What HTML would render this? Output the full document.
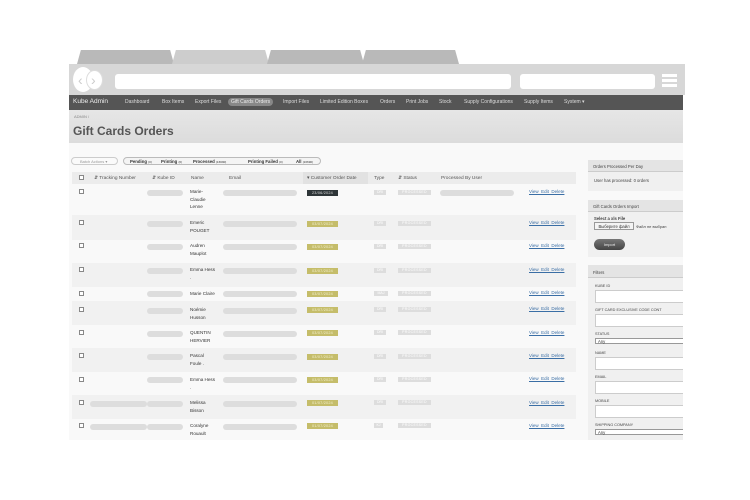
<!DOCTYPE html>
<html><head><meta charset="utf-8"><style>
*{margin:0;padding:0;box-sizing:border-box}
body{width:750px;height:500px;background:#fff;position:relative;overflow:hidden;font-family:"Liberation Sans",Arial,sans-serif;color:#333}
.a{position:absolute}
.tab{position:absolute;top:50px;height:14px;width:97px;background:#b9b9b9;clip-path:polygon(4% 0,96% 0,100% 100%,0 100%)}
.nav span{position:absolute;top:4px;font-size:5px;color:#ddd}
.pill{position:absolute;height:6px;border-radius:3px;background:#ddd}
.cb{position:absolute;width:5px;height:5px;border:0.6px solid #888;background:#fff}
.nm{position:absolute;font-size:4.6px;line-height:7.5px;color:#333}
.dt{position:absolute;width:31px;height:6px;background:#c5bd6a;color:#f3f0d0;font-size:3.8px;text-align:center;line-height:6px;letter-spacing:.2px}
.ty{position:absolute;width:12px;height:5px;background:#ddd;color:#fff;font-size:3.5px;text-align:center;line-height:5px}
.st{position:absolute;width:33px;height:5px;background:#ddd;color:#fff;font-size:3.5px;text-align:center;line-height:5px;letter-spacing:.3px}
.ac{position:absolute;font-size:4.5px;color:#3a6ea5;text-decoration:underline}
.th{position:absolute;top:176px;font-size:4.8px;color:#555}
.sl{position:absolute;font-size:4.2px;color:#444}
.inp{position:absolute;left:595px;width:88px;height:13px;background:#fff;border:0.6px solid #ccc;border-right:none}
.sel{position:absolute;left:595px;width:88px;height:6px;background:#fff;border:0.6px solid #999;border-right:none;font-size:4.2px;line-height:5px;padding-left:2px}
</style></head><body>
<div class="tab" style="left:77px"></div>
<div class="tab" style="left:172px;background:#cdcdcd"></div>
<div class="tab" style="left:267px"></div>
<div class="tab" style="left:362px"></div>
<div class="a" style="left:69px;top:64px;width:616px;height:31px;background:#d7d7d7"></div>
<div class="a" style="left:73px;top:67px;width:20px;height:25px;border-radius:50%;background:#fff"></div>
<div class="a" style="left:86px;top:70px;width:17px;height:20px;border-radius:50%;background:#fff;border:1px solid #ddd"></div>
<div class="a" style="left:78px;top:73px;font-size:14px;color:#ccc;line-height:14px">&#x2039;</div>
<div class="a" style="left:91px;top:73px;font-size:14px;color:#ccc;line-height:14px">&#x203A;</div>
<div class="a" style="left:115px;top:74px;width:396px;height:15px;background:#fff;border-radius:3px"></div>
<div class="a" style="left:520px;top:74px;width:135px;height:15px;background:#fff;border-radius:3px"></div>
<div class="a" style="left:662px;top:74px;width:15px;height:3px;background:#fff"></div>
<div class="a" style="left:662px;top:79px;width:15px;height:3px;background:#fff"></div>
<div class="a" style="left:662px;top:84px;width:15px;height:3px;background:#fff"></div>
<div class="a nav" style="left:69px;top:95px;width:614px;height:15px;background:#555">
<span style="left:4px;top:3px;font-size:6.5px;color:#eee">Kube Admin</span>
<span style="left:56px">Dashboard</span><span style="left:93px">Box Items</span><span style="left:126px">Export Files</span>
<span style="left:159px;top:3px;background:#888;border-radius:4px;padding:1px 3px;color:#eee">Gift Cards Orders</span>
<span style="left:214px">Import Files</span><span style="left:251px">Limited Edition Boxes</span><span style="left:311px">Orders</span><span style="left:337px">Print Jobs</span><span style="left:370px">Stock</span><span style="left:395px">Supply Configurations</span><span style="left:455px">Supply Items</span><span style="left:495px">System ▾</span>
</div>
<div class="a" style="left:69px;top:110px;width:614px;height:33px;background:linear-gradient(#e6e6e6,#dcdcdc)"></div>
<div class="a" style="left:74px;top:114px;font-size:4px;color:#888">ADMIN /</div>
<div class="a" style="left:73px;top:124px;font-size:12px;font-weight:bold;color:#555">Gift Cards Orders</div>
<div class="a" style="left:69px;top:143px;width:614px;height:297px;background:#f9f9f9"></div>
<div class="a" style="left:71px;top:157px;width:47px;height:8px;border:0.6px solid #ccc;border-radius:4px;font-size:4px;color:#999;line-height:7px;padding-left:8px;background:#fafafa">Batch Actions ▾</div>
<div class="a" style="left:123px;top:157px;width:198px;height:8px;border:0.6px solid #bbb;border-radius:4px;background:#f4f4f4;font-size:4.3px;line-height:7px;color:#333">
<span class="a" style="left:6px;font-weight:bold">Pending <span style="font-weight:normal;font-size:3px">(0)</span></span>
<span class="a" style="left:37px;font-weight:bold">Printing <span style="font-weight:normal;font-size:3px">(0)</span></span>
<span class="a" style="left:69px;font-weight:bold">Processed <span style="font-weight:normal;font-size:3px">(16690)</span></span>
<span class="a" style="left:124px;font-weight:bold">Printing Failed <span style="font-weight:normal;font-size:3px">(0)</span></span>
<span class="a" style="left:172px;font-weight:bold">All <span style="font-weight:normal;font-size:3px">(16690)</span></span>
</div>
<div class="a" style="left:72px;top:172px;width:504px;height:12px;background:#ececec"></div>
<div class="a" style="left:303px;top:172px;width:65px;height:12px;background:#e2e2e2"></div>
<div class="cb" style="left:79px;top:175px"></div>
<div class="th" style="left:94px">⇵ Tracking Number</div>
<div class="th" style="left:152px">⇵ Kube ID</div>
<div class="th" style="left:191px">Name</div>
<div class="th" style="left:229px">Email</div>
<div class="th" style="left:307px">▾ Customer Order Date</div>
<div class="th" style="left:374px">Type</div>
<div class="th" style="left:398px">⇵ Status</div>
<div class="th" style="left:441px">Processed By User</div>

<div class="a" style="left:72px;top:215px;width:504px;height:25px;background:#f1f1f1"></div>
<div class="a" style="left:72px;top:263px;width:504px;height:24px;background:#f1f1f1"></div>
<div class="a" style="left:72px;top:301px;width:504px;height:24px;background:#f1f1f1"></div>
<div class="a" style="left:72px;top:348px;width:504px;height:24px;background:#f1f1f1"></div>
<div class="a" style="left:72px;top:395px;width:504px;height:24px;background:#f1f1f1"></div>

<div class="cb" style="left:79px;top:189px"></div><div class="pill" style="left:147px;top:190px;width:36px"></div><div class="nm" style="left:190px;top:188px">Marie-<br>Claudie<br>Lenne</div><div class="pill" style="left:223px;top:190px;width:74px"></div><div class="dt" style="left:307px;top:190px;background:#2e3538;color:#ddd">23/06/2024</div><div class="ty" style="left:374px;top:190px">DRI</div><div class="st" style="left:398px;top:190px">PROCESSED</div><div class="pill" style="left:440px;top:190px;width:74px"></div><div class="ac" style="left:529px;top:189px">View&nbsp; Edit&nbsp; Delete</div>

<div class="cb" style="left:79px;top:220px"></div><div class="pill" style="left:147px;top:221px;width:36px"></div><div class="nm" style="left:190px;top:219px">Emeric<br>POUGET</div><div class="pill" style="left:223px;top:221px;width:74px"></div><div class="dt" style="left:307px;top:221px">03/07/2024</div><div class="ty" style="left:374px;top:221px">DRI</div><div class="st" style="left:398px;top:221px">PROCESSED</div><div class="ac" style="left:529px;top:220px">View&nbsp; Edit&nbsp; Delete</div>

<div class="cb" style="left:79px;top:243px"></div><div class="pill" style="left:147px;top:244px;width:36px"></div><div class="nm" style="left:190px;top:242px">Audren<br>Mauplot</div><div class="pill" style="left:223px;top:244px;width:74px"></div><div class="dt" style="left:307px;top:244px">03/07/2024</div><div class="ty" style="left:374px;top:244px">DRI</div><div class="st" style="left:398px;top:244px">PROCESSED</div><div class="ac" style="left:529px;top:243px">View&nbsp; Edit&nbsp; Delete</div>

<div class="cb" style="left:79px;top:267px"></div><div class="pill" style="left:147px;top:268px;width:36px"></div><div class="nm" style="left:190px;top:266px">Emma Hess<br>.</div><div class="pill" style="left:223px;top:268px;width:74px"></div><div class="dt" style="left:307px;top:268px">03/07/2024</div><div class="ty" style="left:374px;top:268px">DRI</div><div class="st" style="left:398px;top:268px">PROCESSED</div><div class="ac" style="left:529px;top:267px">View&nbsp; Edit&nbsp; Delete</div>

<div class="cb" style="left:79px;top:291px"></div><div class="pill" style="left:147px;top:291px;width:36px"></div><div class="nm" style="left:190px;top:290px">Marie Claire</div><div class="pill" style="left:223px;top:291px;width:74px"></div><div class="dt" style="left:307px;top:291px">03/07/2024</div><div class="ty" style="left:374px;top:291px;width:14px">MAJ</div><div class="st" style="left:398px;top:291px">PROCESSED</div><div class="ac" style="left:529px;top:290px">View&nbsp; Edit&nbsp; Delete</div>

<div class="cb" style="left:79px;top:307px"></div><div class="pill" style="left:147px;top:308px;width:36px"></div><div class="nm" style="left:190px;top:306px">Noémie<br>Husson</div><div class="pill" style="left:223px;top:308px;width:74px"></div><div class="dt" style="left:307px;top:307px">03/07/2024</div><div class="ty" style="left:374px;top:307px">DRI</div><div class="st" style="left:398px;top:307px">PROCESSED</div><div class="ac" style="left:529px;top:306px">View&nbsp; Edit&nbsp; Delete</div>

<div class="cb" style="left:79px;top:330px"></div><div class="pill" style="left:147px;top:331px;width:36px"></div><div class="nm" style="left:190px;top:329px">QUENTIN<br>HERVIER</div><div class="pill" style="left:223px;top:331px;width:74px"></div><div class="dt" style="left:307px;top:330px">03/07/2024</div><div class="ty" style="left:374px;top:330px">DRI</div><div class="st" style="left:398px;top:330px">PROCESSED</div><div class="ac" style="left:529px;top:330px">View&nbsp; Edit&nbsp; Delete</div>

<div class="cb" style="left:79px;top:353px"></div><div class="pill" style="left:147px;top:354px;width:36px"></div><div class="nm" style="left:190px;top:352px">Pascal<br>Foule .</div><div class="pill" style="left:223px;top:354px;width:74px"></div><div class="dt" style="left:307px;top:354px">03/07/2024</div><div class="ty" style="left:374px;top:354px">DRI</div><div class="st" style="left:398px;top:354px">PROCESSED</div><div class="ac" style="left:529px;top:353px">View&nbsp; Edit&nbsp; Delete</div>

<div class="cb" style="left:79px;top:377px"></div><div class="pill" style="left:147px;top:377px;width:36px"></div><div class="nm" style="left:190px;top:376px">Emma Hess<br>.</div><div class="pill" style="left:223px;top:377px;width:74px"></div><div class="dt" style="left:307px;top:377px">03/07/2024</div><div class="ty" style="left:374px;top:377px">DRI</div><div class="st" style="left:398px;top:377px">PROCESSED</div><div class="ac" style="left:529px;top:376px">View&nbsp; Edit&nbsp; Delete</div>

<div class="cb" style="left:79px;top:400px"></div><div class="pill" style="left:90px;top:401px;width:57px"></div><div class="pill" style="left:147px;top:401px;width:36px"></div><div class="nm" style="left:190px;top:399px">Melissa<br>Bisson</div><div class="pill" style="left:223px;top:401px;width:74px"></div><div class="dt" style="left:307px;top:400px">01/07/2024</div><div class="ty" style="left:374px;top:400px">DRI</div><div class="st" style="left:398px;top:400px">PROCESSED</div><div class="ac" style="left:529px;top:400px">View&nbsp; Edit&nbsp; Delete</div>

<div class="cb" style="left:79px;top:423px"></div><div class="pill" style="left:90px;top:424px;width:57px"></div><div class="pill" style="left:147px;top:424px;width:36px"></div><div class="nm" style="left:190px;top:422px">Coralyne<br>Rouault</div><div class="pill" style="left:223px;top:424px;width:74px"></div><div class="dt" style="left:307px;top:423px">01/07/2024</div><div class="ty" style="left:374px;top:423px;width:9px">KJ</div><div class="st" style="left:398px;top:423px">PROCESSED</div><div class="ac" style="left:529px;top:423px">View&nbsp; Edit&nbsp; Delete</div>

<div class="a" style="left:588px;top:160px;width:95px;height:31px;background:#f0f0f0"></div>
<div class="a" style="left:588px;top:160px;width:95px;height:12px;background:#e4e4e4;border-bottom:0.6px solid #ccc"></div>
<div class="sl" style="left:593px;top:164px">Orders Processed Per Day</div>
<div class="sl" style="left:594px;top:178px">User has processed: 0 orders</div>
<div class="a" style="left:588px;top:200px;width:95px;height:57px;background:#f0f0f0"></div>
<div class="a" style="left:588px;top:200px;width:95px;height:12px;background:#e4e4e4;border-bottom:0.6px solid #ccc"></div>
<div class="sl" style="left:593px;top:204px">Gift Cards Orders Import</div>
<div class="sl" style="left:594px;top:216px;font-weight:bold">Select a xls File</div>
<div class="a" style="left:594px;top:222px;width:40px;height:8px;border:0.6px solid #999;background:#f4f4f4;font-size:4.2px;line-height:7px;text-align:center">Выберите файл</div>
<div class="sl" style="left:636px;top:224px;font-size:4px">Файл не выбран</div>
<div class="a" style="left:594px;top:239px;width:31px;height:11px;border-radius:6px;background:linear-gradient(#777,#444);color:#eee;font-size:4px;line-height:11px;text-align:center">Import</div>
<div class="a" style="left:588px;top:265px;width:95px;height:175px;background:#f0f0f0"></div>
<div class="a" style="left:588px;top:265px;width:95px;height:13px;background:#e4e4e4;border-bottom:0.6px solid #ccc"></div>
<div class="sl" style="left:593px;top:270px">Filters</div>
<div class="sl" style="left:595px;top:284px;font-size:3.8px">KUBE ID</div><div class="inp" style="top:290px"></div>
<div class="sl" style="left:595px;top:308px;font-size:3.8px">GIFT CARD EXCLUSIVE CODE CONT</div><div class="inp" style="top:314px"></div>
<div class="sl" style="left:595px;top:332px;font-size:3.8px">STATUS</div><div class="sel" style="top:338px">Any</div>
<div class="sl" style="left:595px;top:351px;font-size:3.8px">NAME</div><div class="inp" style="top:357px"></div>
<div class="sl" style="left:595px;top:375px;font-size:3.8px">EMAIL</div><div class="inp" style="top:381px"></div>
<div class="sl" style="left:595px;top:399px;font-size:3.8px">MOBILE</div><div class="inp" style="top:405px"></div>
<div class="sl" style="left:595px;top:423px;font-size:3.8px">SHIPPING COMPANY</div><div class="sel" style="top:429px">Any</div>
</body></html>
